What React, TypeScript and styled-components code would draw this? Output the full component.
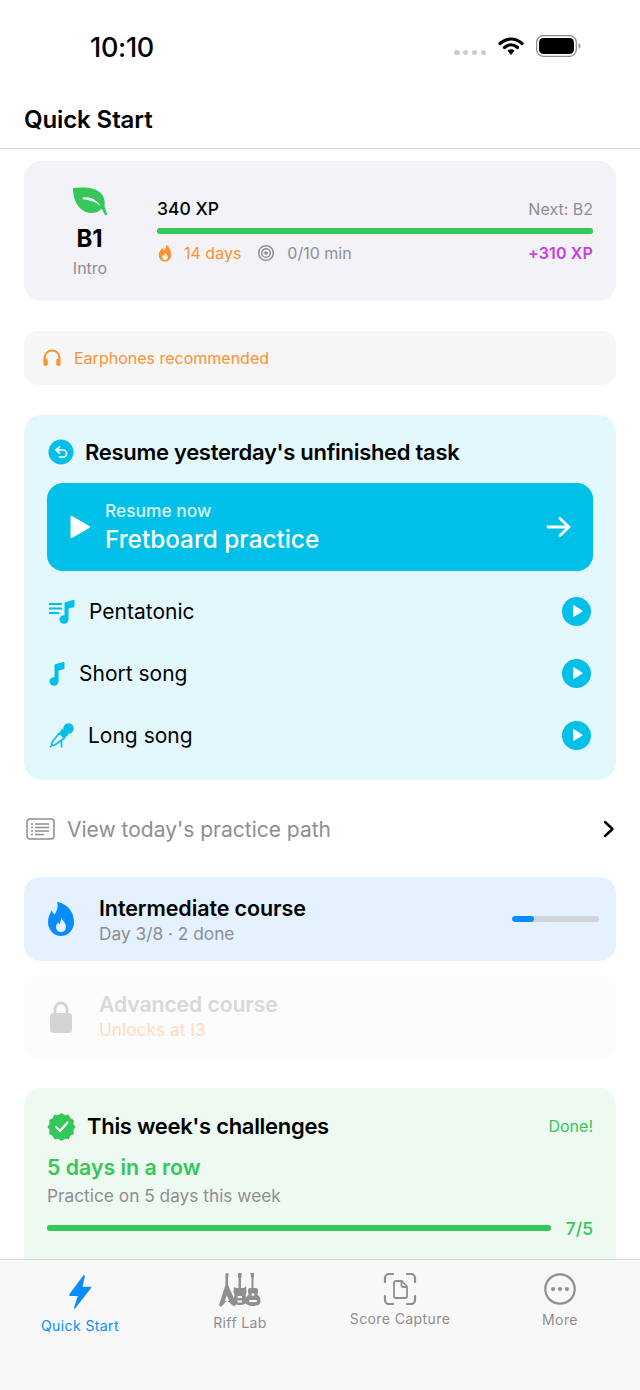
import styled, { createGlobalStyle } from 'styled-components'

const GlobalStyle = createGlobalStyle`
  html, body {
    margin: 0;
    padding: 0;
    background: #ffffff;
  }
  body {
    font-family: Inter, "Noto Sans", "Liberation Sans", sans-serif;
    color: #000000;
  }
  * { box-sizing: border-box; }
`

const BLUE = '#0a8cff'
const CYAN = '#00c0e8'
const GREEN = '#34c759'
const ORANGE = '#ff9230'
const GREY = '#8e8e93'

const FLAME = 'M13.500 1c.6 3.600-1 5.600-3 7.700C9.700 7.900 9.300 6.900 9.200 5.700 6.400 7.700 4 10.800 4 14.500 4 19.300 7.600 23 12 23s8-3.700 8-8.500C20 8.800 16.700 3.400 13.500 1z'

const Flame = ({ color }: { color: string }) => (
  <svg width="14" height="18" viewBox="3.500 0.500 17 23">
    <path d={FLAME} fill={color} />
    <path d="M12.300 11.500c.3 1.900 3.200 3.100 3.200 6 0 2-1.500 3.500-3.500 3.500s-3.500-1.500-3.500-3.500c0-1.500.8-2.500 1.700-3.300.2.700.5 1.100 1 1.400.6-1.300.9-2.700.6-4.100z" fill="#ffffff" />
  </svg>
)

const PlayBadge = () => (
  <PlayCircle>
    <svg width="14" height="14" viewBox="0 0 14 14">
      <path d="M3 1.800v10.400c0 .5.500.8 1 .5l8.200-4.900c.5-.3.500-.9 0-1.200L4 1.300c-.5-.3-1 0-1 .5z" fill="#ffffff" />
    </svg>
  </PlayCircle>
)

const App = () => {
  return (
    <Page>
      <GlobalStyle />
      <StatusBar>
        <Clock>10:10</Clock>
        <StatusIcons>
          <Dots>
            <i /><i /><i /><i />
          </Dots>
          <svg width="28" height="20" viewBox="0 0 26 20">
            <path d="M2 7.500C8.500 1.500 17.500 1.500 24 7.500" fill="none" stroke="#000" strokeWidth="3.200" strokeLinecap="round" />
            <path d="M6.500 11.500C10.500 8 15.500 8 19.500 11.500" fill="none" stroke="#000" strokeWidth="3.200" strokeLinecap="round" />
            <path d="M9.500 14.500C11.500 12.800 14.500 12.800 16.500 14.500L13 19z" fill="#000" />
          </svg>
          <svg width="45" height="22" viewBox="0 0 45 22">
            <rect x="0.700" y="0.700" width="39.600" height="20.600" rx="6.500" fill="none" stroke="#8a8a8a" strokeWidth="1.300" />
            <rect x="3" y="3" width="35" height="16" rx="4.500" fill="#000" />
            <path d="M42.500 8c1.300.4 2 1.500 2 3s-.7 2.600-2 3z" fill="#9a9a9a" />
          </svg>
        </StatusIcons>
      </StatusBar>
      <Header>Quick Start</Header>

      <Scroll>
        <LevelCard>
          <LevelBadge>
            <svg width="36" height="30" viewBox="0 0 36 30" style={{ marginLeft: -2 }}>
              <path d="M1 1C11 0 25 0 30.500 8c2.200 3.200 2.600 8 2 11.500l2.500 7.500c.4 1.300-1.500 2-2.200.8l-3-6C25 27 15 28 8.500 21.500 2.500 15.500 1 8 1 1z" fill={GREEN} />
              <path d="M11 10.500c6-1 13 1 17.500 8.500-5-4-10-6-16.500-6.500-1.600-.2-2.500-1.700-1-2z" fill="#f2f2f7" />
            </svg>
            <LevelCode>B1</LevelCode>
            <LevelName>Intro</LevelName>
          </LevelBadge>
          <LevelBody>
            <XpRow>
              <XpValue>340 XP</XpValue>
              <NextLevel>Next: B2</NextLevel>
            </XpRow>
            <Bar $height={6} $track="#34c759">
              <BarFill $color={GREEN} style={{ width: '100%' }} />
            </Bar>
            <MetaRow>
              <MetaGroup>
                <Flame color={ORANGE} />
                <StreakText>14 days</StreakText>
                <svg width="18" height="18" viewBox="0 0 18 18" style={{ marginLeft: 16 }}>
                  <circle cx="9" cy="9" r="7.300" fill="none" stroke={GREY} strokeWidth="1.500" />
                  <circle cx="9" cy="9" r="4.300" fill="none" stroke={GREY} strokeWidth="1.500" />
                  <circle cx="9" cy="9" r="1.800" fill={GREY} />
                </svg>
                <MinutesText>0/10 min</MinutesText>
              </MetaGroup>
              <BonusXp>+310 XP</BonusXp>
            </MetaRow>
          </LevelBody>
        </LevelCard>

        <Notice>
          <svg width="20" height="20" viewBox="0 0 20 20">
            <path d="M2.500 13V10a7.500 7.500 0 0 1 15 0v3" fill="none" stroke={ORANGE} strokeWidth="1.900" />
            <rect x="1.500" y="10.500" width="4.200" height="7.500" rx="2" fill={ORANGE} />
            <rect x="14.300" y="10.500" width="4.200" height="7.500" rx="2" fill={ORANGE} />
          </svg>
          <NoticeText>Earphones recommended</NoticeText>
        </Notice>

        <ResumeCard>
          <ResumeTitleRow>
            <svg width="26" height="26" viewBox="0 0 26 26">
              <circle cx="13" cy="13" r="12.500" fill={CYAN} />
              <path d="M11.500 7.800 8 11l3.500 3.200M8.500 11H15a3.500 3.500 0 0 1 0 7.200h-3.500" fill="none" stroke="#fff" strokeWidth="1.700" strokeLinecap="round" strokeLinejoin="round" />
            </svg>
            <ResumeTitle>Resume yesterday's unfinished task</ResumeTitle>
          </ResumeTitleRow>
          <ResumeButton>
            <svg width="22" height="24" viewBox="0 0 22 24">
              <path d="M1.500 2.300v19.400c0 1 1 1.600 1.900 1.100l17-9.700c.9-.5.900-1.700 0-2.200l-17-9.700c-.9-.5-1.900.1-1.900 1.100z" fill="#ffffff" />
            </svg>
            <ResumeLabels>
              <ResumeHint>Resume now</ResumeHint>
              <ResumeName>Fretboard practice</ResumeName>
            </ResumeLabels>
            <svg width="26" height="22" viewBox="0 0 26 22">
              <path d="M2 11h21M14 2.500l9 8.500-9 8.500" fill="none" stroke="#fff" strokeWidth="2.800" strokeLinecap="round" strokeLinejoin="round" />
            </svg>
          </ResumeButton>
          <TaskList>
            <TaskRow>
              <TaskLabel>
                <svg width="26" height="25" viewBox="0 0 26 25" style={{ marginLeft: 2 }}>
                  <path d="M0 5h13M0 9.500h13M0 14h10" stroke={CYAN} strokeWidth="1.800" />
                  <path d="M15.500 3.500 24 1c1-.3 1.500.2 1.500 1v5c0 .8-.4 1.200-1 1.300L19.500 9.500V20h-4z" fill={CYAN} />
                  <ellipse cx="15" cy="20.500" rx="4.500" ry="4.200" fill={CYAN} />
                </svg>
                <TaskName $gap={14}>Pentatonic</TaskName>
              </TaskLabel>
              <PlayBadge />
            </TaskRow>
            <TaskRow>
              <TaskLabel>
                <svg width="16" height="25" viewBox="0 0 16 25" style={{ marginLeft: 2 }}>
                  <path d="M5.500 3.500 14 1c1-.3 1.500.2 1.500 1v5c0 .8-.4 1.200-1 1.300L9.500 9.500V20h-4z" fill={CYAN} />
                  <ellipse cx="5" cy="20.500" rx="4.500" ry="4.200" fill={CYAN} />
                </svg>
                <TaskName $gap={14}>Short song</TaskName>
              </TaskLabel>
              <PlayBadge />
            </TaskRow>
            <TaskRow>
              <TaskLabel>
                <svg width="25" height="25" viewBox="0 0 25 25" style={{ marginLeft: 2 }}>
                  <circle cx="19.500" cy="5.500" r="5.200" fill={CYAN} />
                  <path d="M13.200 5.500 19.500 11.800 15 15.500 10 10.500z" fill={CYAN} />
                  <path d="M10.500 10 15.500 15 6.500 21.500l-2.500 1-1.500-1.500 1-2.500z" fill="none" stroke={CYAN} strokeWidth="1.600" strokeLinejoin="round" />
                  <path d="M12.500 17.500v7M0.800 24.200 3.500 21.500" stroke={CYAN} strokeWidth="1.700" fill="none" />
                </svg>
                <TaskName $gap={14}>Long song</TaskName>
              </TaskLabel>
              <PlayBadge />
            </TaskRow>
          </TaskList>
        </ResumeCard>

        <PathRow>
          <PathLabel>
            <svg width="29" height="22" viewBox="0 0 29 22">
              <rect x="1" y="1" width="27" height="20" rx="3" fill="none" stroke={GREY} strokeWidth="1.500" />
              <path d="M5 6h2M5 9.500h2M5 13h2M5 16.500h2M9 6h14M9 9.500h14M9 13h14M9 16.500h9" stroke={GREY} strokeWidth="1.300" />
            </svg>
            <PathText>View today's practice path</PathText>
          </PathLabel>
          <svg width="12" height="18" viewBox="0 0 12 18">
            <path d="M2 2l7.500 7L2 16" fill="none" stroke="#000" strokeWidth="2.400" strokeLinecap="round" strokeLinejoin="round" />
          </svg>
        </PathRow>

        <Courses>
          <CourseCard $bg="#e4f1fe">
            <CourseIcon>
              <svg width="28" height="36" viewBox="0 0 28 36">
                <path d="M10 1c7 1 17 7 17 20 0 8-6 14-13 14S1 29 1 21c0-5 2-9 4-12 .3 2 1 3.500 2.500 4.500C10 10 11.500 6 10 1z" fill={BLUE} />
                <path d="M14 16c.5 3 5 5 5 10 0 3-2.300 5-5 5s-5-2-5-5c0-2 1-3.500 2.300-4.500.2.800.6 1.300 1.200 1.700 1-2 1.800-4.500 1.500-7.200z" fill="#e4f1fe" />
              </svg>
            </CourseIcon>
            <CourseText>
              <CourseTitle>Intermediate course</CourseTitle>
              <CourseSub>Day 3/8 · 2 done</CourseSub>
            </CourseText>
            <Bar $height={6} $track="#d1d5db" $width={87}>
              <BarFill $color={BLUE} style={{ width: '25%' }} />
            </Bar>
          </CourseCard>
          <CourseCard $bg="#fcfcfc">
            <CourseIcon>
              <svg width="22" height="32" viewBox="0 0 22 32">
                <path d="M5 13V8a6 6 0 0 1 12 0v5" fill="none" stroke="#d4d4d4" strokeWidth="2.800" />
                <rect x="0" y="12" width="22" height="20" rx="3.500" fill="#d4d4d4" />
              </svg>
            </CourseIcon>
            <CourseText $locked>
              <CourseTitle $locked>Advanced course</CourseTitle>
              <CourseSub $locked>Unlocks at I3</CourseSub>
            </CourseText>
          </CourseCard>
        </Courses>

        <ChallengeCard>
          <ChallengeHead>
            <ChallengeTitleGroup>
              <svg width="29" height="29" viewBox="0 0 29 29">
                <path d="M14.500 1l3.300 2.200 3.900-.5 1.700 3.600 3.500 1.800-.5 3.900 2.100 3-2.100 3 .5 3.900-3.500 1.800-1.700 3.600-3.900-.5-3.300 2.200-3.300-2.200-3.900.5-1.700-3.600-3.500-1.800.5-3.900-2.100-3 2.100-3-.5-3.900 3.500-1.800 1.700-3.600 3.900.5z" fill={GREEN} />
                <path d="M9 15l4 4 7.500-8.500" fill="none" stroke="#fff" strokeWidth="2.200" strokeLinecap="round" strokeLinejoin="round" />
              </svg>
              <ChallengeTitle>This week's challenges</ChallengeTitle>
            </ChallengeTitleGroup>
            <DoneText>Done!</DoneText>
          </ChallengeHead>
          <ChallengeName>5 days in a row</ChallengeName>
          <ChallengeSub>Practice on 5 days this week</ChallengeSub>
          <ChallengeProgress>
            <Bar $height={6} $track="#34c759">
              <BarFill $color={GREEN} style={{ width: '100%' }} />
            </Bar>
            <ChallengeCount>7/5</ChallengeCount>
          </ChallengeProgress>
        </ChallengeCard>
      </Scroll>

      <TabBar>
        <TabItem>
          <svg width="24" height="38" viewBox="0 0 26 38">
            <path d="M16.500 1.200 1.500 21.500c-.6.800-.1 1.700.8 1.700h8.400L6.500 36c-.3 1 .8 1.500 1.400.7L24.800 15c.6-.8.100-1.700-.8-1.700h-8.300L18.300 2c.3-1-1.100-1.600-1.800-.8z" fill={BLUE} />
          </svg>
          <TabLabel $active $top={6}>Quick Start</TabLabel>
        </TabItem>
        <TabItem>
          <svg width="42" height="35" viewBox="0 0 42 35">
            <g fill={GREY}>
              <path d="M6.500 0.500 9.500 0v3l-.5 1v8l8.500 19-2.500 2.500-7-6-6 6.500L0 32 6.500 12V4z" />
              <path d="M19 0h3.500v4L22 5v10h3l2-2 .5 6-1 3.500 1.500 4c.5 3-1.500 5.500-7 5.500s-7.500-2.500-7-5.500l1.500-4-1-3.500.5-5 2 1h2.500V5L19 4z" />
              <path d="M31.500 0H35v4l-.5 1v10H37c1.500 0 2 1 2 3 0 1.500-.5 2.500-.5 4 2 1 3 3 3 6 0 3.500-2.500 5-7.500 5s-7.500-1.500-7.500-5c0-3 1-5 3-6 0-1.500-.5-2.500-.5-4 0-2 .5-3 2-3h1.500V5l-.5-1z" />
            </g>
            <g fill="#f8f8f8">
              <rect x="30" y="27" width="8" height="2" rx="1" />
              <circle cx="34" cy="21.500" r="1.500" />
              <rect x="18.500" y="23" width="4.500" height="2" />
              <rect x="18.500" y="27.500" width="4.500" height="2" />
              <path d="M7.800 22.500l2.700 5.500H5.500z" />
            </g>
          </svg>
          <TabLabel $top={6}>Riff Lab</TabLabel>
        </TabItem>
        <TabItem>
          <svg width="34" height="32" viewBox="0 0 34 32">
            <path d="M2 9V5a4 4 0 0 1 4-4h4M24 1h4a4 4 0 0 1 4 4v4M32 23v4a4 4 0 0 1-4 4h-4M10 31H6a4 4 0 0 1-4-4v-4" fill="none" stroke={GREY} strokeWidth="2.200" strokeLinecap="round" />
            <path d="M11 10a2 2 0 0 1 2-2h6l5 5.500V23a2 2 0 0 1-2 2h-9a2 2 0 0 1-2-2z" fill="none" stroke={GREY} strokeWidth="1.800" strokeLinejoin="round" />
            <path d="M18.500 8v4.500a1.500 1.500 0 0 0 1.500 1.500h4" fill="none" stroke={GREY} strokeWidth="1.800" />
          </svg>
          <TabLabel $top={5}>Score Capture</TabLabel>
        </TabItem>
        <TabItem>
          <svg width="32" height="32" viewBox="0 0 32 32">
            <circle cx="16" cy="16" r="14.700" fill="none" stroke={GREY} strokeWidth="2.200" />
            <circle cx="9" cy="16" r="2" fill={GREY} />
            <circle cx="16" cy="16" r="2" fill={GREY} />
            <circle cx="23" cy="16" r="2" fill={GREY} />
          </svg>
          <TabLabel $top={6}>More</TabLabel>
        </TabItem>
      </TabBar>
    </Page>
  )
}

export default App

const Page = styled.div`
  width: 640px;
  height: 1390px;
  display: flex;
  flex-direction: column;
  overflow: hidden;
  background: #ffffff;
`

const StatusBar = styled.div`
  height: 95px;
  display: flex;
  justify-content: space-between;
  align-items: flex-start;
  padding: 31px 59px 0 90px;
`

const Clock = styled.div`
  font-size: 27px;
  line-height: 34px;
  font-weight: 500;
  letter-spacing: -0.3px;
`

const StatusIcons = styled.div`
  display: flex;
  align-items: center;
  gap: 11px;
  margin-top: 4px;
`

const Dots = styled.div`
  display: flex;
  gap: 3.300px;
  margin-top: 13px;

  i {
    width: 5.500px;
    height: 5.500px;
    border-radius: 50%;
    background: #cccccc;
  }
`

const Header = styled.div`
  height: 54px;
  padding: 8px 24px 0;
  font-size: 24px;
  line-height: 34px;
  font-weight: 600;
  letter-spacing: -0.1px;
  border-bottom: 1px solid #dedede;
`

const Scroll = styled.div`
  flex: 1;
  min-height: 0;
  overflow: hidden;
  padding: 12px 24px 0;
  display: flex;
  flex-direction: column;
`

const LevelCard = styled.div`
  flex: none;
  height: 140px;
  border-radius: 18px;
  background: #f2f2f7;
  display: flex;
  padding: 0 23px 0 0;
`

const LevelBadge = styled.div`
  width: 133px;
  flex: none;
  display: flex;
  flex-direction: column;
  align-items: center;
  padding-top: 26px;
`

const LevelCode = styled.div`
  font-size: 24px;
  line-height: 30px;
  font-weight: 700;
  margin-top: 7px;
  margin-left: -2px;
`

const LevelName = styled.div`
  font-size: 16px;
  line-height: 20px;
  margin-top: 4px;
  margin-left: -1px;
  color: ${GREY};
`

const LevelBody = styled.div`
  flex: 1;
  padding-top: 37px;
`

const XpRow = styled.div`
  display: flex;
  justify-content: space-between;
  align-items: center;
  height: 22px;
  margin-bottom: 8px;
`

const XpValue = styled.div`
  font-size: 17.500px;
  font-weight: 500;
  margin-top: -2px;
`

const NextLevel = styled.div`
  font-size: 16px;
  color: ${GREY};
`

const Bar = styled.div<{ $height: number; $track: string; $width?: number }>`
  flex: ${(p) => (p.$width ? 'none' : '1')};
  width: ${(p) => (p.$width ? `${p.$width}px` : '100%')};
  height: ${(p) => p.$height}px;
  border-radius: ${(p) => p.$height / 2}px;
  background: ${(p) => p.$track};
  overflow: hidden;
`

const BarFill = styled.div<{ $color: string }>`
  height: 100%;
  border-radius: 3px;
  background: ${(p) => p.$color};
`

const MetaRow = styled.div`
  display: flex;
  justify-content: space-between;
  align-items: center;
  margin-top: 8px;
  height: 22px;
`

const MetaGroup = styled.div`
  display: flex;
  align-items: center;
  padding-left: 1px;
`

const StreakText = styled.span`
  font-size: 16px;
  color: ${ORANGE};
  margin-left: 12px;
`

const MinutesText = styled.span`
  font-size: 16px;
  color: ${GREY};
  margin-left: 12px;
`

const BonusXp = styled.div`
  font-size: 16px;
  font-weight: 600;
  letter-spacing: 0.15px;
  color: #c93ee0;
`

const Notice = styled.div`
  flex: none;
  height: 54px;
  margin-top: 30px;
  padding: 0 18px;
  border-radius: 14px;
  background: #f6f6f6;
  display: flex;
  align-items: center;
  gap: 12px;
`

const NoticeText = styled.span`
  font-size: 16px;
  font-weight: 400;
  color: ${ORANGE};
`

const ResumeCard = styled.div`
  flex: none;
  height: 365px;
  margin-top: 30px;
  padding: 24px 23px 0;
  border-radius: 18px;
  background: #e3f8fd;
`

const ResumeTitleRow = styled.div`
  display: flex;
  align-items: center;
  gap: 11px;
  height: 26px;
  margin-left: 1px;
`

const ResumeTitle = styled.div`
  font-size: 22px;
  font-weight: 600;
  letter-spacing: -0.3px;
`

const ResumeButton = styled.div`
  height: 88px;
  margin-top: 18px;
  padding: 0 21px 0 22px;
  border-radius: 16px;
  background: ${CYAN};
  display: flex;
  align-items: center;
  color: #ffffff;
`

const ResumeLabels = styled.div`
  flex: 1;
  margin-left: 14px;
`

const ResumeHint = styled.div`
  font-size: 17.400px;
  line-height: 20px;
  font-weight: 500;
  padding-top: 1px;
  opacity: 0.85;
`

const ResumeName = styled.div`
  font-size: 24.300px;
  line-height: 30px;
  font-weight: 500;
  margin-top: 3px;
`

const TaskList = styled.div`
  margin-top: 9px;
`

const TaskRow = styled.div`
  height: 62px;
  display: flex;
  align-items: center;
  justify-content: space-between;
  padding-right: 2px;
`

const TaskLabel = styled.div`
  display: flex;
  align-items: center;
`

const TaskName = styled.span<{ $gap: number }>`
  font-size: 21px;
  margin-left: ${(p) => p.$gap}px;
`

const PlayCircle = styled.div`
  width: 29px;
  height: 29px;
  border-radius: 50%;
  background: ${CYAN};
  display: flex;
  align-items: center;
  justify-content: center;
  padding-left: 1px;
`

const PathRow = styled.div`
  flex: none;
  height: 62px;
  margin-top: 18px;
  padding: 0 1px 0 2px;
  display: flex;
  align-items: center;
  justify-content: space-between;
`

const PathLabel = styled.div`
  display: flex;
  align-items: center;
  gap: 12px;
`

const PathText = styled.span`
  font-size: 21px;
  color: ${GREY};
`

const Courses = styled.div`
  flex: none;
  margin-top: 17px;
  display: flex;
  flex-direction: column;
  gap: 14px;
`

const CourseCard = styled.div<{ $bg: string }>`
  height: 84px;
  padding: 0 17px 0 0;
  border-radius: 16px;
  background: ${(p) => p.$bg};
  display: flex;
  align-items: center;
`

const CourseIcon = styled.div`
  width: 73px;
  flex: none;
  margin-right: 2px;
  display: flex;
  justify-content: center;
`

const CourseText = styled.div<{ $locked?: boolean }>`
  flex: 1;
  padding: ${(p) => (p.$locked ? '0 0 3px' : '1px 0 0')};
`

const CourseTitle = styled.div<{ $locked?: boolean }>`
  font-size: ${(p) => (p.$locked ? '21.200px' : '21.500px')};
  line-height: 28px;
  font-weight: 600;
  letter-spacing: -0.1px;
  color: ${(p) => (p.$locked ? '#d8d8d8' : '#000000')};
`

const CourseSub = styled.div<{ $locked?: boolean }>`
  font-size: 17.300px;
  line-height: 24px;
  color: ${(p) => (p.$locked ? '#ffdcbd' : GREY)};
`

const ChallengeCard = styled.div`
  flex: none;
  height: 190px;
  margin-top: 29px;
  padding: 22px 23px 0;
  border-radius: 18px;
  background: #eef9f1;
`

const ChallengeHead = styled.div`
  display: flex;
  align-items: center;
  justify-content: space-between;
  height: 32px;
`

const ChallengeTitleGroup = styled.div`
  display: flex;
  align-items: center;
  gap: 11px;
`

const ChallengeTitle = styled.div`
  font-size: 22px;
  font-weight: 600;
  letter-spacing: -0.3px;
`

const DoneText = styled.div`
  font-size: 16px;
  font-weight: 400;
  color: ${GREEN};
`

const ChallengeName = styled.div`
  font-size: 21.300px;
  line-height: 28px;
  font-weight: 600;
  margin-top: 11px;
  color: ${GREEN};
`

const ChallengeSub = styled.div`
  font-size: 17.300px;
  line-height: 24px;
  margin-top: 3px;
  color: ${GREY};
`

const ChallengeProgress = styled.div`
  display: flex;
  align-items: center;
  gap: 15px;
  margin-top: 8px;
  height: 24px;
`

const ChallengeCount = styled.div`
  font-size: 17.500px;
  font-weight: 500;
  color: ${GREEN};
`

const TabBar = styled.div`
  flex: none;
  height: 131px;
  border-top: 1px solid #d8d8d8;
  background: #f8f8f8;
  display: grid;
  grid-template-columns: repeat(4, 1fr);
`

const TabItem = styled.div`
  display: flex;
  flex-direction: column;
  align-items: center;
  padding-top: 13px;
`

const TabLabel = styled.div<{ $active?: boolean; $top: number }>`
  font-size: 14px;
  line-height: 18px;
  letter-spacing: 0.4px;
  margin-top: ${(p) => p.$top}px;
  color: ${(p) => (p.$active ? BLUE : GREY)};
`
